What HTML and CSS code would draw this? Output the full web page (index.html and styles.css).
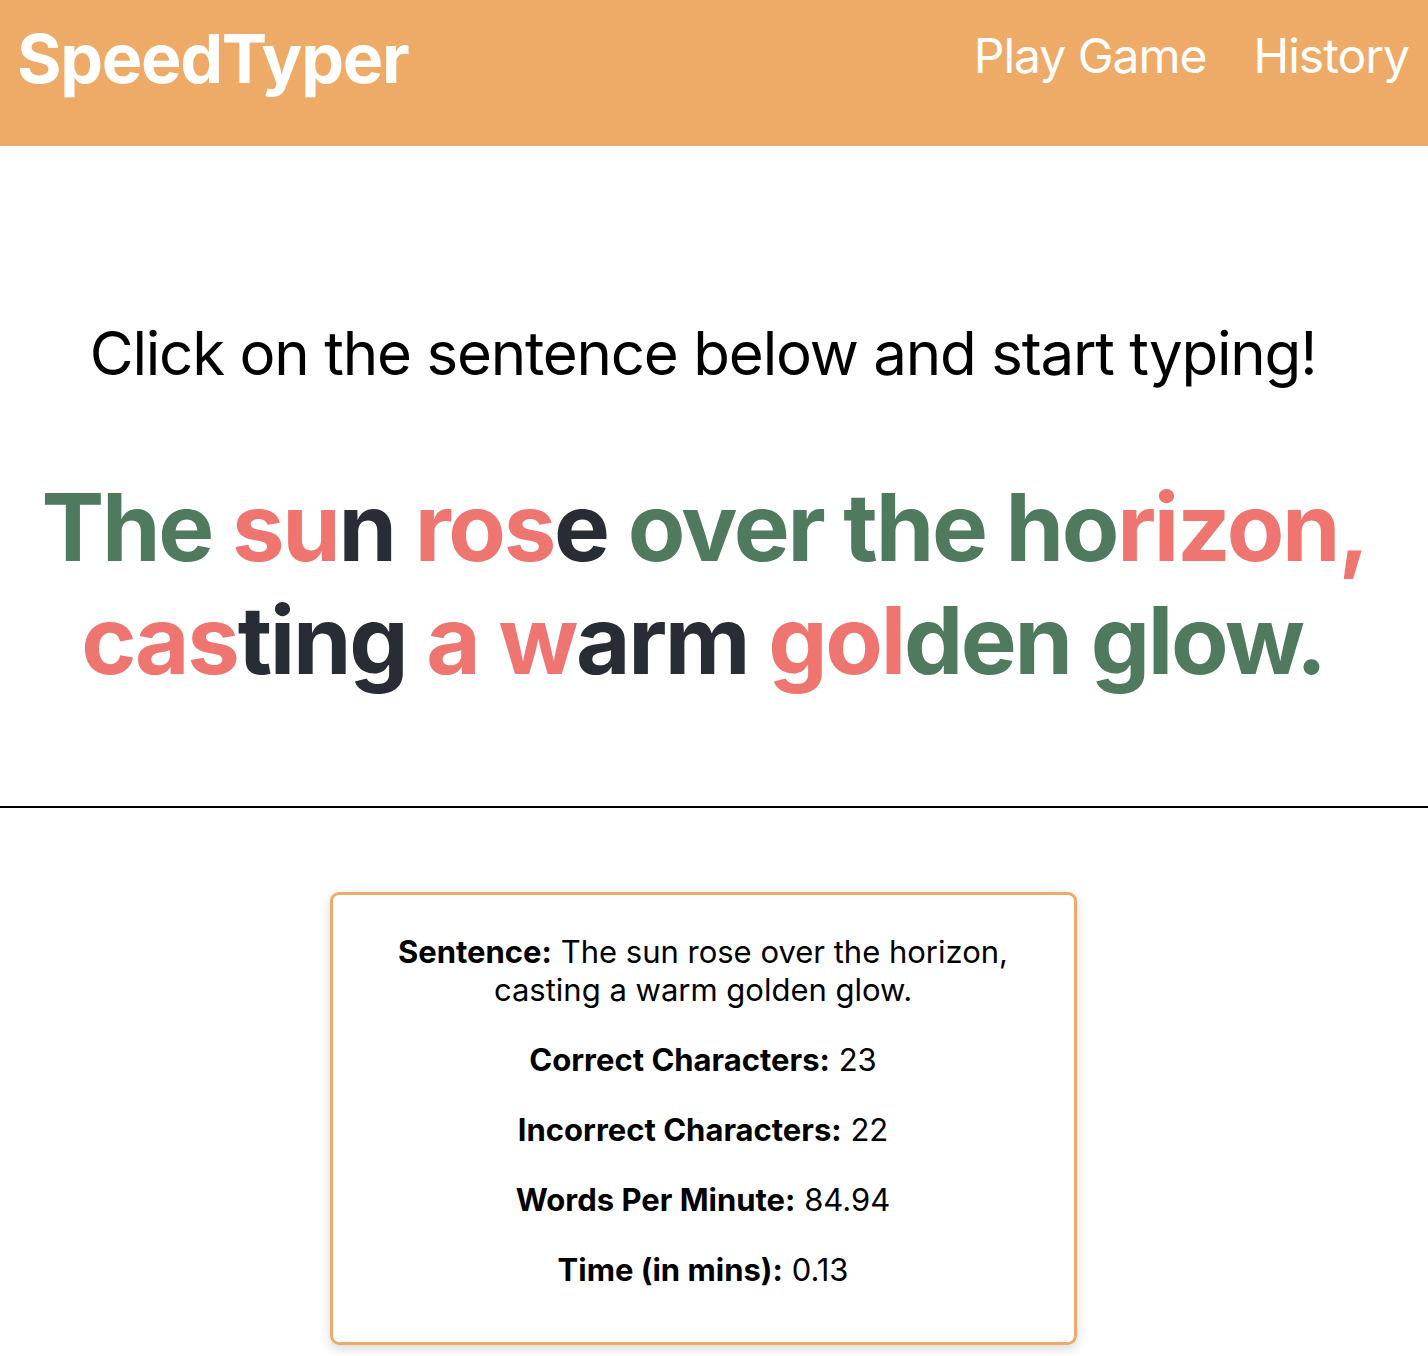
FILE: index.html
```html
<!DOCTYPE html>
<html lang="en">
<head>
<meta charset="utf-8">
<title>SpeedTyper</title>
<link rel="stylesheet" href="styles.css">
</head>
<body>
<header class="topbar">
  <a class="logo" href="#">SpeedTyper</a>
  <nav class="nav">
    <a class="nav-link" href="#">Play Game</a>
    <a class="nav-link" href="#">History</a>
  </nav>
</header>
<main>
  <section class="prompt">
    <h2 class="instruction">Click on the sentence below and start typing!</h2>
    <p class="sentence"><span class="ok">The </span><span class="bad">su</span><span class="todo">n </span><span class="bad">ros</span><span class="todo">e</span><span class="ok"> over the ho</span><span class="bad">rizon,</span> <span class="bad">cas</span><span class="todo">ting </span><span class="bad">a w</span><span class="todo">arm </span><span class="bad">gol</span><span class="ok">den glow.</span></p>
  </section>
  <hr class="divider">
  <section class="results">
    <div class="card">
      <p class="stat"><strong>Sentence:</strong> The sun rose over the horizon, casting a warm golden glow.</p>
      <p class="stat"><strong>Correct Characters:</strong> 23</p>
      <p class="stat"><strong>Incorrect Characters:</strong> 22</p>
      <p class="stat"><strong>Words Per Minute:</strong> 84.94</p>
      <p class="stat"><strong>Time (in mins):</strong> 0.13</p>
    </div>
  </section>
</main>
</body>
</html>
```
FILE: styles.css
```css
* { box-sizing: border-box; }
html, body { margin: 0; padding: 0; }
body {
  font-family: Inter, "Noto Sans", "Liberation Sans", sans-serif;
  color: #000;
  background: #fff;
}
.topbar {
  height: 146px;
  background: #eeab67;
  display: flex;
  justify-content: space-between;
  align-items: flex-start;
  padding: 0 19px 0 17px;
}
.logo {
  color: #fff;
  text-decoration: none;
  font-weight: 700;
  font-size: 68px;
  line-height: 68px;
  letter-spacing: -1.3px;
  margin-top: 24px;
}
.nav {
  display: flex;
  gap: 47px;
  margin-top: 32px;
}
.nav-link {
  color: #fff;
  text-decoration: none;
  font-size: 48px;
  line-height: 48px;
  letter-spacing: -1px;
}
.prompt {
  padding: 171px 22px 0 0;
  text-align: center;
}
.instruction {
  margin: 0;
  font-weight: 400;
  font-size: 60px;
  line-height: 72px;
  letter-spacing: -1.2px;
}
.sentence {
  margin: 82px 0 0;
  padding: 0;
  font-weight: 700;
  font-size: 94px;
  line-height: 113px;
  letter-spacing: -2.3px;
}
.ok { color: #4f7a5d; }
.bad { color: #ef7571; }
.todo { color: #282c34; }
.divider {
  margin: 109px 0 0;
  border: 0;
  border-top: 2px solid #000;
  height: 0;
}
.results {
  padding: 84px 22px 40px 0;
  display: flex;
  justify-content: center;
}
.card {
  width: 747px;
  border: 3px solid #eeab67;
  border-radius: 9px;
  box-shadow: 0 4px 12px rgba(0, 0, 0, 0.15);
  padding: 38px 60px 53px;
  display: flex;
  flex-direction: column;
  gap: 32px;
  text-align: center;
}
.stat {
  margin: 0;
  font-size: 31px;
  line-height: 38px;
}
.stat strong { font-weight: 700; }
```
